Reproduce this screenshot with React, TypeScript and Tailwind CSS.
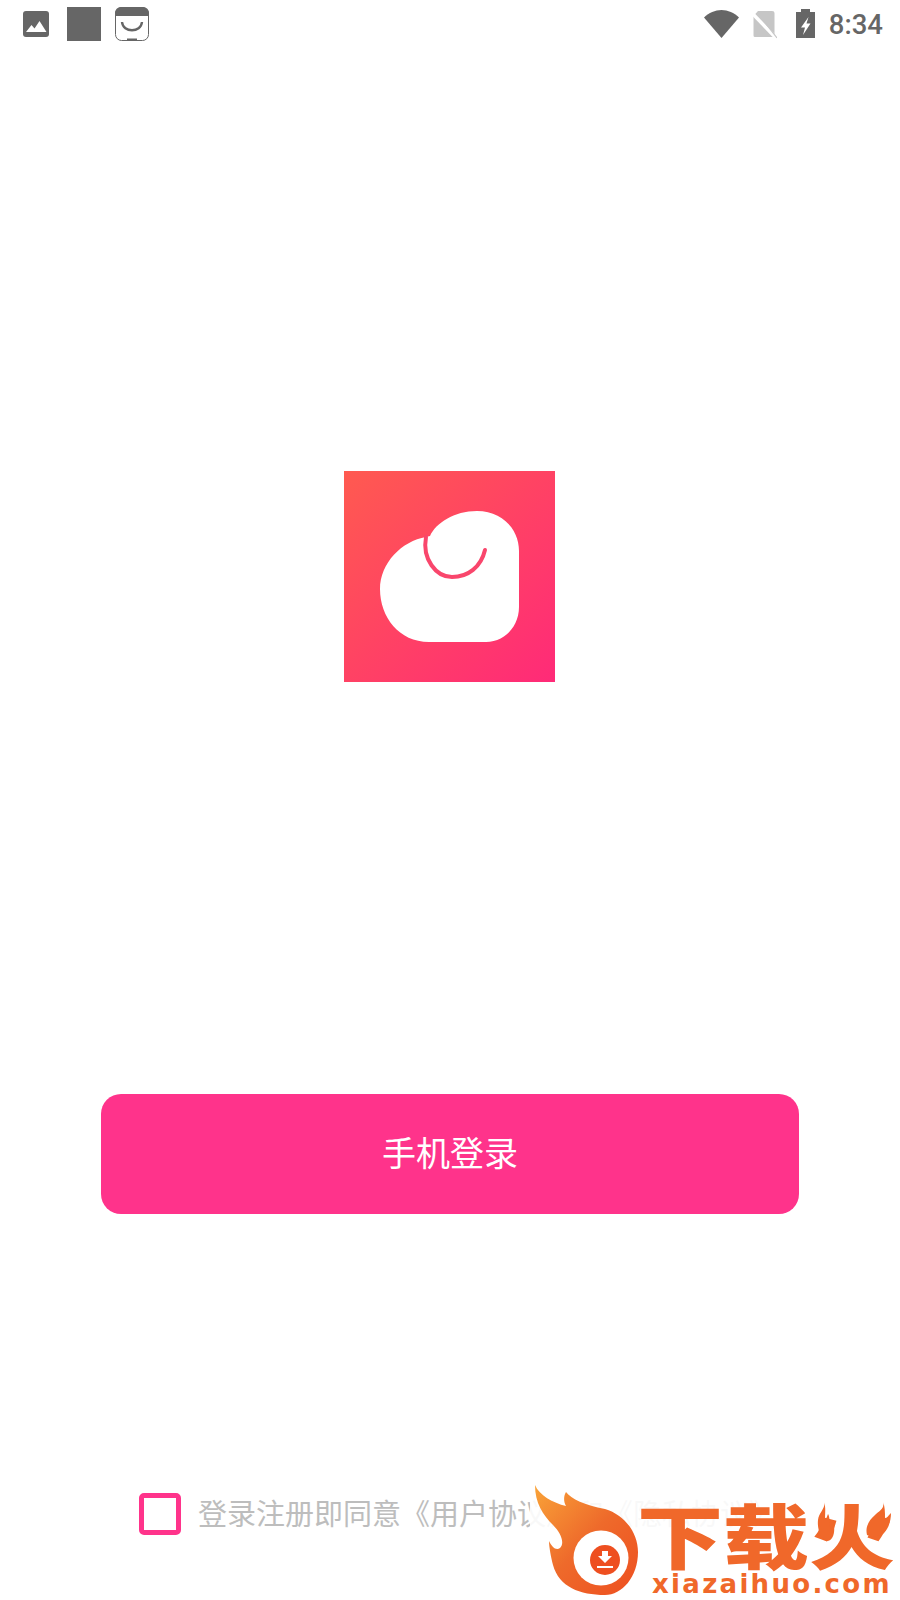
const cjk = "font-['Roboto','Noto_Sans_CJK_SC',sans-serif]";

function StatusBar() {
  return (
    <div className="flex h-[60px] items-start justify-between pl-[23px] pr-[17px] text-[#666666]">
      <div className="flex items-start">
        <svg viewBox="0 0 26 26" className="mt-[11px] h-[26px] w-[26px]">
          <rect width="26" height="26" rx="3" fill="#666666" />
          <path d="M3 21l5.5-7 3 3.5 5-7.5 7 11z" fill="#ffffff" />
        </svg>
        <div className="ml-[18px] mt-[7px] h-[34px] w-[34px] bg-[#666666]" />
        <svg viewBox="0 0 34 34" className="ml-[14px] mt-[7px] h-[34px] w-[34px]">
          <rect x="0.5" y="0.5" width="33" height="33" rx="6" fill="#ffffff" stroke="#666666" />
          <path d="M0 9V6a6 6 0 0 1 6-6h22a6 6 0 0 1 6 6v3z" fill="#666666" />
          <path d="M7 15c1 11 19 11 20 0" fill="none" stroke="#666666" strokeWidth="2.4" />
          <rect x="12" y="31.5" width="10" height="2" fill="#666666" />
        </svg>
      </div>
      <div className="flex items-start">
        <svg viewBox="0 0 35 28" className="mt-[10px] h-[28px] w-[35px]">
          <path d="M0 7.5C5 2.8 11 0 17.5 0S30 2.8 35 7.5L17.5 28z" fill="#666666" />
        </svg>
        <svg viewBox="0 0 26 28" className="ml-[12px] mt-[11px] h-[28px] w-[26px]">
          <path d="M7 0h14a2.5 2.5 0 0 1 2.500 2.500v22a1.500 1.500 0 0 1-1.500 1.500H4a1.500 1.500 0 0 1-1.500-1.500V5z" fill="#c6c6c6" />
          <path d="M0 1l25 26" stroke="#ffffff" strokeWidth="3.5" />
          <path d="M15 13l11 14" stroke="#c6c6c6" strokeWidth="1.200" />
        </svg>
        <svg viewBox="0 0 19 29" className="ml-[19px] mt-[9px] h-[29px] w-[19px]">
          <path d="M5 0h9v3h5v26H0V3h5z" fill="#666666" />
          <path d="M12.500 8L5 18.500h4L7 26l7.500-11.500h-4z" fill="#ffffff" />
        </svg>
        <span className={`ml-[14px] mt-[9px] text-[27.5px] font-medium leading-[32px] ${cjk}`}>8:34</span>
      </div>
    </div>
  );
}

function Watermark() {
  return (
    <div className="absolute bottom-0 left-[530px] h-[125px] w-[370px] bg-white/90">
      <svg viewBox="0 0 125 125" className="absolute left-[-5px] top-0 h-[125px] w-[125px]">
        <defs>
          <linearGradient id="flame" x1="0" y1="0" x2="1" y2="1">
            <stop offset="0" stopColor="#f9a338" />
            <stop offset="0.5" stopColor="#ee6a2b" />
            <stop offset="1" stopColor="#ee4f20" />
          </linearGradient>
        </defs>
        <path
          d="M10 10C14 20 28 28 41 31 38 26 39 20 41 17 46 24 60 30 80 34 100 40 113 58 113 77 113 102 97 120 80 120 55 120 34 112 28 90 26 82 24 72 24 66 27 72 31 76 35 73 40 68 36 58 28 50 18 40 10 28 10 10Z"
          fill="url(#flame)"
        />
        <circle cx="76" cy="83" r="27.500" fill="#ffffff" />
        <circle cx="80" cy="85" r="15" fill="#ee4f20" />
        <path d="M77 76h6v5h4l-7 7-7-7h4z" fill="#ffffff" />
        <rect x="72" y="91" width="16" height="2" fill="#ffffff" />
      </svg>
      <div className="absolute left-[107px] top-[26px] flex h-[66px] font-['Noto_Sans_CJK_SC',sans-serif] text-[86px] font-black leading-[66px] text-[#f0682a]">
        <span className="w-[86px] scale-y-[0.82] text-center">下</span>
        <span className="w-[86px] scale-y-[0.82] text-center">载</span>
        <span className="w-[86px] scale-y-[0.82] text-center">火</span>
      </div>
      {/* little flames either side of the last character */}
      <svg viewBox="0 0 80 42" className="absolute left-[285px] top-[27px] h-[42px] w-[80px]">
        <path d="M9 0c2 6-5 10-6 18-1 9 3 20 9 21 6 0 8-8 7-16-2 3-3 4-4 3 0-8-1-13-2-14-1 3-2 5-3 5 0-6 1-12-1-17z" fill="#f0682a" />
        <path d="M68 0c2 7-4 9-8 13-6 5-10 12-8 20 4 2 12 2 17-2 5-5 7-13 7-20-3 3-4 5-6 5 0-6 0-11-2-16z" fill="#f0682a" />
      </svg>
      <div className="absolute left-[122px] top-[94px] font-['DejaVu_Sans',sans-serif] text-[26px] font-bold leading-[30px] tracking-[2.3px] text-[#f0682a]">
        xiazaihuo.com
      </div>
    </div>
  );
}

export default function App() {
  return (
    <div className="relative flex h-[1600px] w-[900px] flex-col overflow-hidden bg-white">
      <StatusBar />
      <div className="ml-[344px] mt-[411px] h-[211px] w-[211px]">
        <svg viewBox="0 0 211 211" className="h-[211px] w-[211px]">
          <defs>
            <linearGradient id="logoBg" x1="0" y1="0" x2="1" y2="1">
              <stop offset="0" stopColor="#ff5a50" />
              <stop offset="1" stopColor="#ff2a78" />
            </linearGradient>
          </defs>
          <rect width="211" height="211" fill="url(#logoBg)" />
          <g className="blur-[0.6px]">
            <path
              d="M86 65C92 52 110 40 133 40 158 40 175 58 175 80V136C175 156 160 171 142 171H85C55 171 36 146 36 118 36 92 58 70 82 66Z"
              fill="#ffffff"
            />
            <path d="M82 66C78 88 92 106 108 106 124 106 137 96 141 79" fill="none" stroke="#f9466c" strokeWidth="4" strokeLinecap="round" />
          </g>
        </svg>
      </div>
      <button className={`mx-auto mt-[412px] flex h-[120px] w-[698px] items-center justify-center rounded-[20px] bg-[#ff338b] text-[34px] text-white ${cjk}`}>
        手机登录
      </button>
      <div className="ml-[139px] mt-[278px] flex items-center">
        <div className="h-[42px] w-[42px] rounded-[5px] border-[5px] border-[#ff338b]" />
        <span className={`ml-[17px] whitespace-nowrap pt-[2px] text-[29px] leading-[42px] text-[#bdbdbd] ${cjk}`}>
          登录注册即同意《用户协议》和《隐私协议》
        </span>
      </div>
      <Watermark />
    </div>
  );
}
